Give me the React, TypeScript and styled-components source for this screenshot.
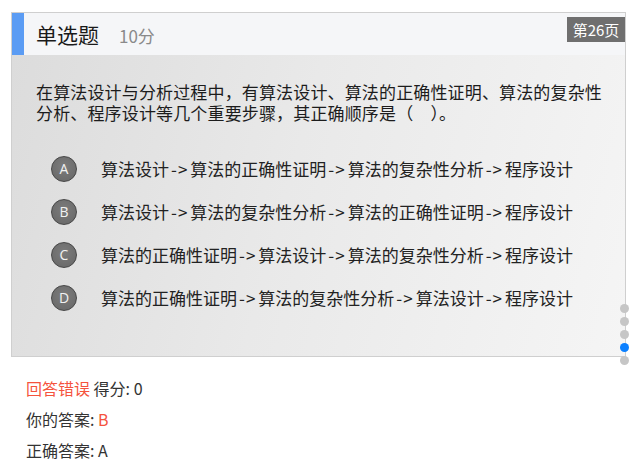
import React from 'react';
import styled, { createGlobalStyle } from 'styled-components';

const GlobalStyle = createGlobalStyle`
  html, body {
    margin: 0;
    padding: 0;
    background: #fff;
  }
  body {
    font-family: "Noto Sans CJK SC", "Noto Sans", sans-serif;
    color: #222;
  }
`;

const options = [
  { key: 'A', steps: ['算法设计', '算法的正确性证明', '算法的复杂性分析', '程序设计'] },
  { key: 'B', steps: ['算法设计', '算法的复杂性分析', '算法的正确性证明', '程序设计'] },
  { key: 'C', steps: ['算法的正确性证明', '算法设计', '算法的复杂性分析', '程序设计'] },
  { key: 'D', steps: ['算法的正确性证明', '算法的复杂性分析', '算法设计', '程序设计'] },
];

const App = () => {
  return (
    <>
      <GlobalStyle />
      <Page>
        <Card>
          <Header>
            <AccentBar />
            <Title>单选题</Title>
            <Score>10分</Score>
            <PageBadge>第26页</PageBadge>
          </Header>
          <Body>
            <Question>
              在算法设计与分析过程中，有算法设计、算法的正确性证明、算法的复杂性分析、程序设计等几个重要步骤，其正确顺序是（　）。
            </Question>
            <OptionList>
              {options.map((opt) => (
                <OptionRow key={opt.key}>
                  <OptionBadge>{opt.key}</OptionBadge>
                  <OptionText>
                    {opt.steps.map((s, i) => (
                      <React.Fragment key={i}>
                        {i > 0 && <Arrow>-&gt;</Arrow>}
                        {s}
                      </React.Fragment>
                    ))}
                  </OptionText>
                </OptionRow>
              ))}
            </OptionList>
          </Body>
          <PageDots>
            <Dot />
            <Dot />
            <Dot />
            <Dot active />
            <Dot />
          </PageDots>
        </Card>

        <Results>
          <ResultLine>
            <Red>回答错误</Red> 得分: 0
          </ResultLine>
          <ResultLine>
            你的答案: <Red>B</Red>
          </ResultLine>
          <ResultLine>正确答案: A</ResultLine>
        </Results>
      </Page>
    </>
  );
};

const Page = styled('div')`
  padding: 12px 4px 0 11px;
`;

const Card = styled('div')`
  position: relative;
  width: 613px;
  border: 1px solid #cfcfcf;
`;

const Header = styled('div')`
  position: relative;
  display: flex;
  align-items: center;
  height: 42px;
  background: #f5f6f8;
`;

const AccentBar = styled('div')`
  align-self: stretch;
  width: 12px;
  background: #5b9cf4;
`;

const Title = styled('span')`
  margin-left: 12px;
  font-size: 21px;
  color: #1a1a1a;
  line-height: 1;
`;

const Score = styled('span')`
  margin-left: 20px;
  margin-top: 3px;
  font-size: 17px;
  color: #8a8a8a;
  line-height: 1;
`;

const PageBadge = styled('div')`
  position: absolute;
  top: 4px;
  right: 0;
  width: 58px;
  height: 25px;
  display: flex;
  align-items: center;
  justify-content: center;
  background: #6f6f6f;
  color: #fff;
  font-size: 15px;
`;

const Body = styled('div')`
  padding: 27px 17px 37px 24px;
  background: linear-gradient(105deg, #dcdcdc 0%, #e9e9e9 45%, #f5f5f5 100%);
`;

const Question = styled('p')`
  margin: 0;
  font-size: 17px;
  line-height: 20.5px;
  letter-spacing: 0.15px;
  color: #1c1c1c;
`;

const OptionList = styled('div')`
  margin-top: 24px;
  padding-left: 15px;
  display: flex;
  flex-direction: column;
`;

const OptionRow = styled('div')`
  display: flex;
  align-items: center;
  height: 43px;
`;

const OptionBadge = styled('div')`
  width: 24px;
  height: 24px;
  border-radius: 50%;
  border: 1.5px solid #464646;
  background: radial-gradient(circle at 50% 40%, #7c7c7c, #666);
  color: #f2f2f2;
  font-family: "Open Sans", "Noto Sans", sans-serif;
  font-size: 14px;
  display: flex;
  align-items: center;
  justify-content: center;
  flex-shrink: 0;
`;

const OptionText = styled('span')`
  margin-left: 24px;
  font-size: 17px;
  color: #222;
  white-space: nowrap;
`;

const Arrow = styled('span')`
  padding: 0 2px;
  letter-spacing: 1px;
`;

const PageDots = styled('div')`
  position: absolute;
  right: -4px;
  top: 291px;
  display: flex;
  flex-direction: column;
  gap: 4px;
`;

const Dot = styled('div')<{ active?: boolean }>`
  width: 9px;
  height: 9px;
  border-radius: 50%;
  background: ${({ active }) => (active ? '#0b80ff' : '#c6c6c6')};
`;

const Results = styled('div')`
  margin-top: 16px;
  padding-left: 15px;
`;

const ResultLine = styled('div')`
  font-size: 16px;
  line-height: 31px;
  color: #333;
`;

const Red = styled('span')`
  color: #f5533d;
`;

export default App;
